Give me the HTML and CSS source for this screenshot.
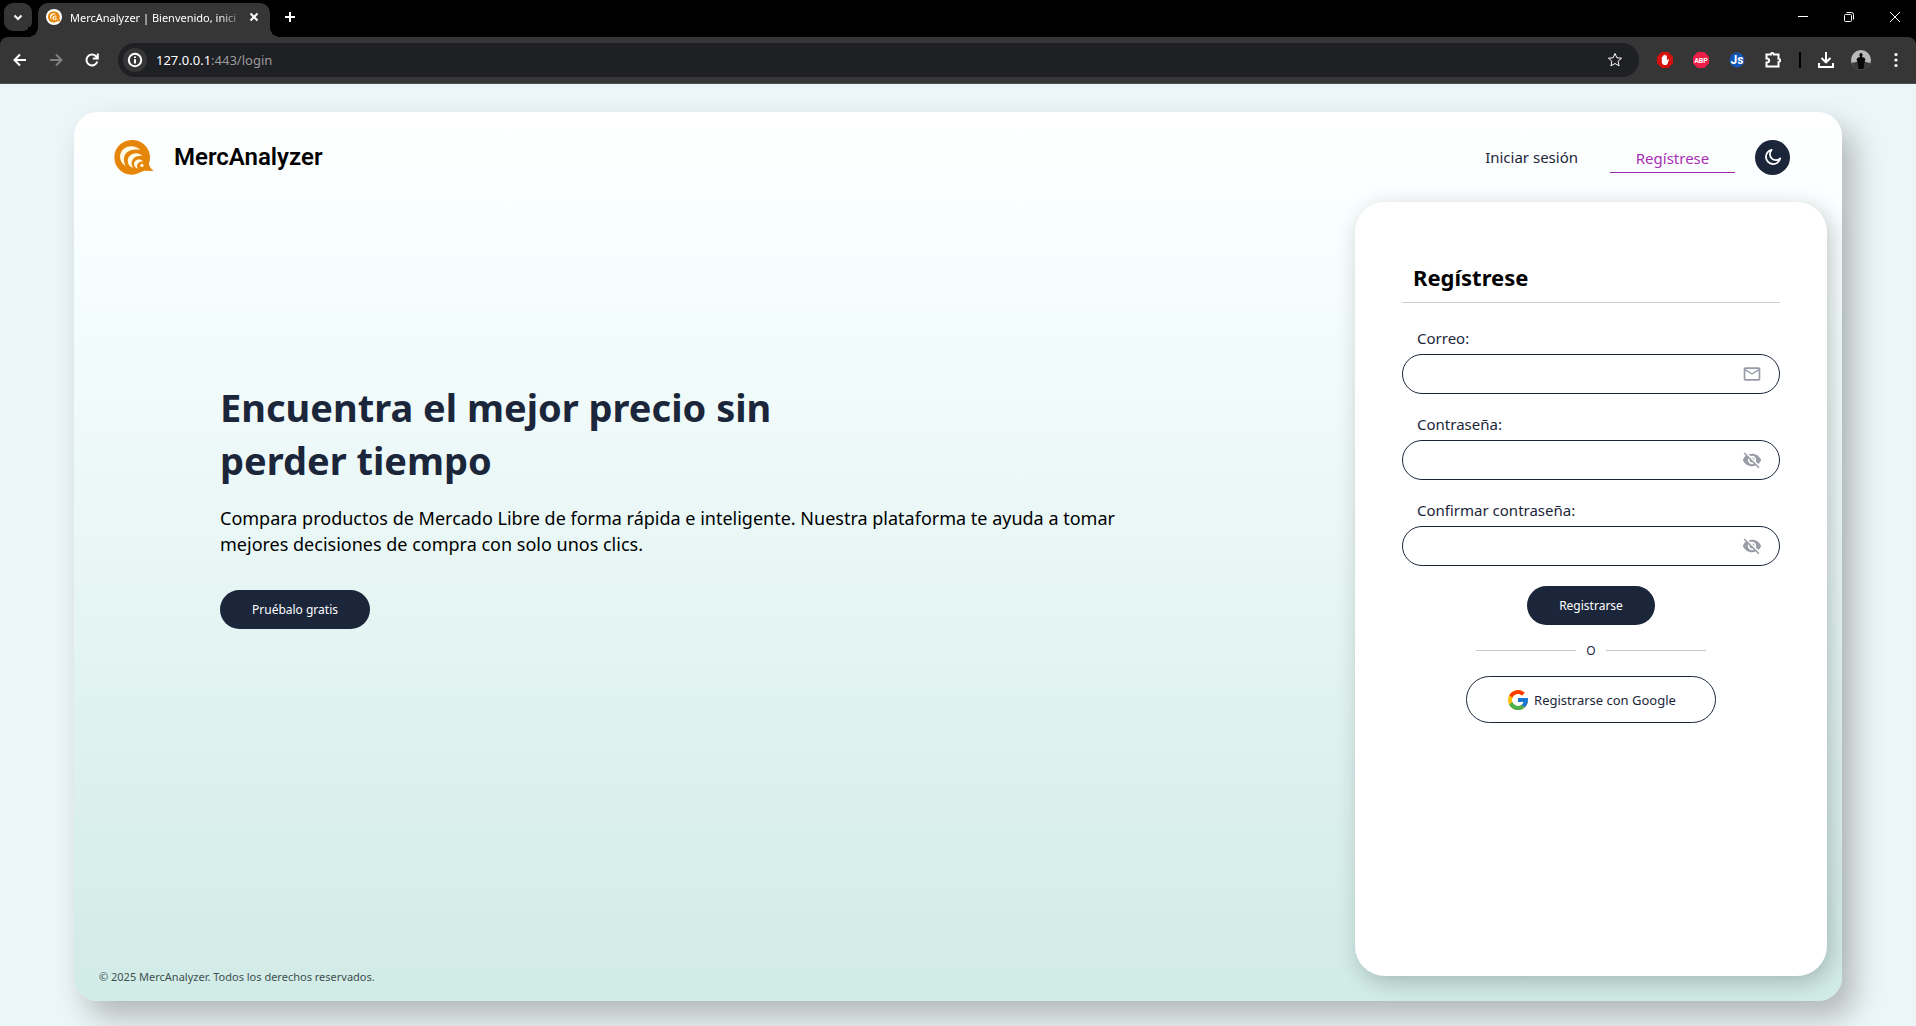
FILE: index.html
```html
<!DOCTYPE html>
<html lang="es">
<head>
<meta charset="utf-8">
<meta name="viewport" content="width=device-width, initial-scale=1">
<title>MercAnalyzer | Bienvenido, inicia sesión</title>
<link rel="stylesheet" href="styles.css">
</head>
<body>
<svg class="defs" aria-hidden="true">
  <symbol id="logo" viewBox="0 0 120 106">
    <path fill="#e68609" d="M53 0a52.500 52.500 0 1 0 22 100q8-5 16-7l29 1q-12-8-15-22a53 53 0 0 0-52-72z"/>
    <path fill="#fffbe9" d="M79 30C60 10 20 18 18 48c-1 14 6 24 18 32C26 64 28 48 38 38c10-9 24-11 41-8z"/>
    <path fill="#fffbe9" d="M86 48C70 32 42 42 41 62c0 12 6 20 18 23-8-10-8-20-2-27 6-8 17-11 29-10z"/>
    <path fill="#fffbe9" d="M88 64C76 54 60 60 60 73c0 7 5 12 12 14-4-6-4-12 0-16 4-5 9-7 16-7z"/>
    <circle cx="84" cy="77" r="5" fill="#fffbe9"/>
  </symbol>
  <symbol id="eye-off" viewBox="0 0 24 24">
    <path d="M12 7c2.760 0 5 2.240 5 5 0 .650-.130 1.260-.360 1.830l2.920 2.920c1.510-1.260 2.700-2.890 3.430-4.750-1.730-4.390-6-7.500-11-7.500-1.400 0-2.740.250-3.980.700l2.160 2.160C10.740 7.130 11.350 7 12 7zM2 4.270l2.280 2.280.460.460C3.080 8.300 1.780 10.020 1 12c1.730 4.390 6 7.500 11 7.500 1.550 0 3.030-.300 4.380-.840l.420.420L19.730 22 21 20.730 3.270 3 2 4.270zM7.530 9.800l1.550 1.550c-.050.210-.080.430-.080.650 0 1.660 1.340 3 3 3 .220 0 .440-.030.650-.080l1.550 1.550c-.670.330-1.410.530-2.200.530-2.760 0-5-2.240-5-5 0-.790.200-1.530.530-2.200z"/>
    <path d="M11.840 9.020l3.150 3.150.020-.160c0-1.660-1.340-3-3-3l-.170.010z"/>
  </symbol>
</svg>

<header class="browser">
  <div class="tabstrip">
    <button class="tab-search" type="button" aria-label="Buscar pestañas"><svg viewBox="0 0 10 10"><path d="M1.500 3.500 5 7l3.500-3.500"/></svg></button>
    <div class="tab">
      <span class="favicon"><svg viewBox="0 0 120 106"><use href="#logo"/></svg></span>
      <span class="tab-title">MercAnalyzer | Bienvenido, inici</span>
      <button class="tab-close" type="button" aria-label="Cerrar"><svg viewBox="0 0 10 10"><path d="m1.500 1.500 7 7m0-7-7 7"/></svg></button>
    </div>
    <button class="new-tab" type="button" aria-label="Nueva pestaña"><svg viewBox="0 0 12 12"><path d="M6 1v10M1 6h10"/></svg></button>
    <div class="window-buttons">
      <button type="button" aria-label="Minimizar"><svg viewBox="0 0 12 12"><path d="M1 5.500h10"/></svg></button>
      <button type="button" aria-label="Restaurar"><svg viewBox="0 0 12 12"><rect x="1.500" y="3.500" width="7" height="7" rx="1"/><path d="M3.500 1.500h5a2 2 0 0 1 2 2v5"/></svg></button>
      <button type="button" aria-label="Cerrar ventana"><svg viewBox="0 0 12 12"><path d="m1 1 10 10m0-10L1 11"/></svg></button>
    </div>
  </div>
  <div class="toolbar">
    <button class="tool" type="button" aria-label="Atrás"><svg viewBox="0 0 16 16"><path d="M14 8H3m5-5.500L2.500 8 8 13.500"/></svg></button>
    <button class="tool dim" type="button" aria-label="Adelante"><svg viewBox="0 0 16 16"><path d="M2 8h11M8 2.500 13.500 8 8 13.500"/></svg></button>
    <button class="tool" type="button" aria-label="Recargar"><svg viewBox="0 0 16 16"><path d="M13.300 9.500A5.500 5.500 0 1 1 12 4.200L13.500 6M13.800 1.500v5h-5"/></svg></button>
    <div class="omnibox">
      <span class="site-info"><svg viewBox="0 0 16 16"><circle cx="8" cy="8" r="6.200"/><path d="M8 7.200V11.500M8 4.500V6"/></svg></span>
      <span class="url"><b>127.0.0.1</b>:443/login</span>
      <svg class="star" viewBox="0 0 16 16"><path d="m8 1.500 1.900 4.300 4.700.400-3.500 3.100 1 4.600L8 11.500l-4.100 2.400 1-4.600L1.400 6.200l4.700-.400z"/></svg>
    </div>
    <div class="extensions">
      <svg viewBox="0 0 16 16"><path fill="#d5110d" d="M4.700 0h6.600L16 4.700v6.600L11.300 16H4.700L0 11.300V4.700z"/><path fill="#fff" d="M4.800 8V5q.600-.900 1.200 0V3.700q.600-.900 1.300 0V3q.700-.900 1.300 0v.800q.700-.800 1.300 0v4.700l1.200-1.300q.800-.200 1 .300L10.400 12q-.500 1-1.600 1H7q-2.200-.500-2.200-3z"/></svg>
      <svg viewBox="0 0 16 16"><path fill="#ed1e45" d="M4.700 0h6.600L16 4.700v6.600L11.300 16H4.700L0 11.300V4.700z"/><text class="badge-abp" x="8" y="11" text-anchor="middle">ABP</text></svg>
      <svg viewBox="0 0 16 16"><circle cx="8" cy="8" r="7.500" fill="#1456b8"/><text class="badge-js" x="8" y="12" text-anchor="middle">Js</text></svg>
      <svg class="line" viewBox="0 0 16 16"><path d="M1.500 2.500h4.300a1.500 1.500 0 0 1 3 0h4.700v4.300a1.600 1.600 0 0 1 0 3.200v4.500h-12v-4q2.700 0 2.700-2t-2.700-2z"/></svg>
    </div>
    <div class="browser-menu">
      <span class="separator"></span>
      <svg class="line" viewBox="0 0 16 16"><path d="M8 0v10M3.500 6 8 10.300 12.500 6M1 11v4h14v-4"/></svg>
      <svg class="avatar" viewBox="0 0 20 20"><circle cx="10" cy="10" r="10" fill="#b9b9b9"/><path fill="#3c3c3c" d="M.500 13q9-3 19 0A10 10 0 0 1 .500 13z"/><path fill="#080808" d="M10 3q1.600 0 1.600 2L11 7q3 .300 3.500 2.500L13.300 13l-.800 6h-5l-.800-6-1.200-3.500Q6 7.300 9 7l-.600-2Q8.400 3 10 3z"/></svg>
      <svg class="dots" viewBox="0 0 16 16"><circle cx="8" cy="2.500" r="1.600"/><circle cx="8" cy="8" r="1.600"/><circle cx="8" cy="13.500" r="1.600"/></svg>
    </div>
  </div>
</header>

<div class="page">
  <div class="shell">
    <header class="site-header">
      <a class="brand" href="#"><svg viewBox="0 0 120 106"><use href="#logo"/></svg>MercAnalyzer</a>
      <nav class="nav">
        <a class="nav-link" href="#">Iniciar sesión</a>
        <a class="nav-link active" href="#">Regístrese</a>
        <button class="theme" type="button" aria-label="Modo oscuro"><svg viewBox="0 0 20 20"><path d="M8.500 2A8 8 0 1 0 18 11.500 5.500 5.500 0 0 1 8.500 2z"/></svg></button>
      </nav>
    </header>

    <main class="content">
      <section class="intro">
        <div class="hero">
          <h1>Encuentra el mejor precio sin perder tiempo</h1>
          <p>Compara productos de Mercado Libre de forma rápida e inteligente. Nuestra plataforma te ayuda a tomar mejores decisiones de compra con solo unos clics.</p>
          <button class="pill" type="button">Pruébalo gratis</button>
        </div>
        <footer>© 2025 MercAnalyzer. Todos los derechos reservados.</footer>
      </section>

      <form class="card">
        <h2>Regístrese</h2>
        <div class="field">
          <label for="email">Correo:</label>
          <div class="control"><input id="email" type="email"><svg viewBox="0 0 24 24"><path d="M22 6c0-1.100-.900-2-2-2H4c-1.100 0-2 .900-2 2v12c0 1.100.900 2 2 2h16c1.100 0 2-.900 2-2V6zm-2 0-8 5-8-5h16zm0 12H4V8l8 5 8-5v10z"/></svg></div>
        </div>
        <div class="field">
          <label for="password">Contraseña:</label>
          <div class="control"><input id="password" type="password"><svg viewBox="0 0 24 24"><use href="#eye-off"/></svg></div>
        </div>
        <div class="field">
          <label for="confirm">Confirmar contraseña:</label>
          <div class="control"><input id="confirm" type="password"><svg viewBox="0 0 24 24"><use href="#eye-off"/></svg></div>
        </div>
        <button class="pill" type="submit">Registrarse</button>
        <div class="or"><span>O</span></div>
        <button class="google" type="button">
          <svg viewBox="0 0 48 48"><path fill="#ffc107" d="M43.600 20H24v8h11.300A12 12 0 1 1 24 12c3.100 0 5.800 1.200 8 3l5.600-5.600A20 20 0 1 0 43.600 20z"/><path fill="#ff3d00" d="m6.300 14.700 6.600 4.800A12 12 0 0 1 24 12c3.100 0 5.800 1.200 8 3l5.600-5.600A20 20 0 0 0 6.300 14.700z"/><path fill="#4caf50" d="M24 44c5.200 0 9.900-2 13.400-5.200l-6.200-5.200A12 12 0 0 1 12.700 28l-6.500 5A20 20 0 0 0 24 44z"/><path fill="#1976d2" d="M43.600 20H24v8h11.300a12 12 0 0 1-4.100 5.600l6.200 5.200C37 39.200 44 34 44 24c0-1.300-.100-2.700-.400-4z"/></svg>
          Registrarse con Google
        </button>
      </form>
    </main>
  </div>
</div>
</body>
</html>
```

FILE: styles.css
```css
* { box-sizing: border-box; }

body {
  margin: 0;
  min-height: 100vh;
  display: flex;
  flex-direction: column;
  background: #ecf5f7;
  color: #1b263b;
  font-family: "Segoe UI", "Noto Sans", "Open Sans", sans-serif;
  font-size: 15px;
}

button { font: inherit; border: 0; padding: 0; background: none; color: inherit; }
a { color: inherit; text-decoration: none; }
svg { display: block; flex: none; }
.defs { position: absolute; width: 0; height: 0; }

/* Browser frame */
.browser { background: #000; color: #fff; }
.tabstrip { display: flex; align-items: center; height: 37px; padding-left: 4px; }
.tabstrip svg, .tool svg, .omnibox svg, .line { fill: none; stroke: currentColor; stroke-width: 2; }
.tab-search {
  width: 28px; height: 28px; margin-bottom: 3px;
  display: grid; place-items: center;
  border-radius: 9px; background: #353535;
}
.tab-search svg { width: 10px; height: 10px; }
.tab {
  position: relative;
  width: 232px; height: 34px;
  display: flex; align-items: center;
  margin: 3px 0 0 6px; padding: 0 8px 6px;
  border-radius: 10px 10px 0 0;
  background: #363636;
}
.tab::before, .tab::after {
  content: "";
  position: absolute; bottom: 0;
  width: 10px; height: 10px;
}
.tab::before { left: -10px; background: radial-gradient(circle at 0 0, #000 10px, #363636 10px); }
.tab::after { right: -10px; background: radial-gradient(circle at 100% 0, #000 10px, #363636 10px); }
.favicon { width: 16px; height: 16px; display: grid; place-items: center; border-radius: 50%; background: #fff; }
.favicon svg { width: 13px; height: 12px; }
.tabstrip .favicon svg { stroke: none; }
.tab-title {
  flex: 1; margin-left: 8px;
  white-space: nowrap;
  font-size: 11px;
  mask-image: linear-gradient(90deg, #000 85%, transparent);
}
.tab-close { margin: 0 3px 0 4px; }
.tab-close svg { width: 10px; height: 10px; }
.new-tab { margin: 0 0 3px 14px; }
.new-tab svg { width: 12px; height: 12px; }
.window-buttons { display: flex; margin: 0 -2px 3px auto; }
.window-buttons button { width: 46px; height: 34px; display: grid; place-items: center; }
.window-buttons svg { width: 12px; height: 12px; }
.tabstrip .window-buttons svg { stroke-width: 1; }

.toolbar {
  display: flex; align-items: center;
  height: 47px; padding: 0 12px;
  border-radius: 8px 8px 0 0;
  border-bottom: 1px solid #4c4c4c;
  background: #363636;
}
.tool { margin-right: 20px; }
.tool + .tool + .tool { margin-right: 18px; }
.tool svg { width: 16px; height: 16px; }
.dim { color: #808080; }
.omnibox {
  flex: 1;
  display: flex; align-items: center;
  height: 34px; margin-right: 18px; padding: 0 16px 0 5px;
  border-radius: 17px;
  background: #1f2024;
}
.site-info { width: 24px; height: 24px; display: grid; place-items: center; border-radius: 50%; background: #363636; }
.omnibox svg { width: 16px; height: 16px; stroke-width: 1; }
.omnibox .site-info svg { stroke-width: 2; }
.url { flex: 1; margin-left: 9px; font-size: 13px; color: #9a9b9d; }
.url b { font-weight: 400; color: #fff; }
.extensions { display: flex; align-items: center; gap: 20px; margin-right: 18px; }
.browser-menu { display: flex; align-items: center; gap: 17px; }
.extensions svg, .browser-menu svg { width: 16px; height: 16px; }
.badge-abp { font: 700 7px Roboto, sans-serif; fill: #fff; }
.badge-js { font: 700 12px Roboto, sans-serif; fill: #fff; }
.separator { width: 2px; height: 16px; background: #000; }
.browser-menu .avatar { width: 20px; height: 20px; }
.dots { fill: #fff; }

/* Page */
.page { flex: 1; display: flex; padding: 28px 74px 25px; }
.shell {
  flex: 1;
  display: flex; flex-direction: column;
  padding: 0 15px 25px 25px;
  border-radius: 24px;
  background: linear-gradient(#fff, #f7fefe 16%, #d1ebe7);
  box-shadow: 12px 16px 30px rgba(0, 0, 0, .25);
}
.site-header {
  display: flex; align-items: center; justify-content: space-between;
  height: 90px; padding: 0 37px 0 15px;
}
.brand {
  display: flex; align-items: center; gap: 20px;
  font: 600 24px/28px Roboto, sans-serif;
  color: #000;
}
.brand svg { width: 40px; height: 35px; }
.nav { display: flex; align-items: center; gap: 20px; }
.nav-link { padding: 6px 12px; line-height: 20px; }
.active {
  width: 125px;
  padding-bottom: 4px;
  border-bottom: 1px solid #952ea1;
  text-align: center;
  color: #a72fb3;
}
.theme {
  width: 35px; height: 35px;
  display: grid; place-items: center;
  border-radius: 50%;
  background: #1b263b; color: #fff;
}
.theme svg { width: 18px; height: 18px; fill: none; stroke: currentColor; stroke-width: 2; stroke-linejoin: round; }

.content { flex: 1; display: flex; }
.intro { flex: 1; display: flex; flex-direction: column; }
.hero { flex: 1; max-width: 1040px; padding: 179px 0 0 121px; }
h1 { max-width: 600px; margin: 0; font-size: 38px; line-height: 53px; font-weight: 700; }
.hero p { margin: 18px 0 33px; font-size: 18px; line-height: 26px; color: #000; }
.pill {
  height: 39px; padding: 0 32px;
  border-radius: 20px;
  background: #1b263b; color: #fff;
  font-size: 12px;
}
footer { font-size: 11px; line-height: 16px; color: #40504f; margin-bottom: -9px; }

.card {
  width: 472px;
  display: flex; flex-direction: column; align-items: center;
  padding: 57px 47px 40px;
  border-radius: 30px;
  background: #fff;
  box-shadow: 4px 6px 22px rgba(0, 0, 0, .22);
}
h2 {
  width: 100%; margin: 0 0 22px; padding: 0 11px 7px;
  border-bottom: 1px solid #ccd0d1;
  font-size: 22px; line-height: 36px; color: #000;
}
.field { width: 100%; margin-bottom: 20px; }
.field label { display: block; margin-left: 15px; padding-bottom: 3px; line-height: 26px; }
.field + .field { margin-top: -3px; }
.control { display: flex; align-items: center; height: 40px; padding: 0 17px; border: 1px solid #1b263b; border-radius: 20px; }
.control input { flex: 1; min-width: 0; border: 0; outline: 0; background: none; font: inherit; }
.control svg { width: 20px; height: 20px; fill: #999ca6; }
.or { display: flex; align-items: center; gap: 10px; width: 230px; margin: 16px 0; font-size: 12px; line-height: 19px; }
.or span { width: 10px; text-align: center; }
.or::before, .or::after { content: ""; flex: 1; height: 1px; background: #c9c9c9; }
.google {
  width: 250px; height: 47px;
  display: flex; align-items: center; justify-content: center; gap: 4px;
  border: 1px solid #1b263b; border-radius: 24px;
  font-size: 13px;
}
.google svg { width: 24px; height: 24px; }
```
